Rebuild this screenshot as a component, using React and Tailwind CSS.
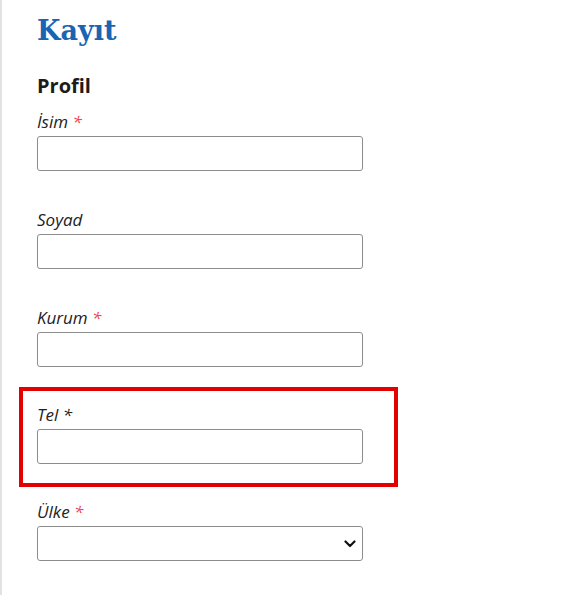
const fields = [
  { id: 'isim', label: 'İsim', required: true },
  { id: 'soyad', label: 'Soyad' },
  { id: 'kurum', label: 'Kurum', required: true },
]

function Label({ text, required, plainStar }) {
  return (
    <label className="block italic text-[17px] leading-[24px] text-[#222] mb-[2px]">
      {text}
      {required && <span className="text-[#f2414b]"> *</span>}
      {plainStar && <span> *</span>}
    </label>
  )
}

function TextField({ label, required, plainStar }) {
  return (
    <div>
      <Label text={label} required={required} plainStar={plainStar} />
      <input
        type="text"
        className="block w-[326px] h-[35px] border border-[#8d8d8d] rounded-[3px] bg-white px-2 outline-none"
      />
    </div>
  )
}

export default function App() {
  return (
    <div
      className="min-h-[595px] bg-white border-l-2 border-[#e2e2e2]"
      style={{ fontFamily: '"Open Sans", "Noto Sans", sans-serif' }}
    >
      <div className="pl-[35px] pt-[13px]">
        <h1 className="font-['DejaVu_Serif',serif] font-bold text-[27px] leading-[36px] text-[#1a64b4]">
          Kayıt
        </h1>

        <h2 className="mt-[23px] font-bold text-[20px] leading-[28px] text-[#1c1c1c]">Profil</h2>

        <div className="mt-[10px] flex flex-col gap-[37px]">
          {fields.map((f) => (
            <TextField key={f.id} label={f.label} required={f.required} />
          ))}
        </div>

        {/* Tel, highlighted */}
        <div className="mt-[20px] -ml-[18px] w-[379px] border-4 border-[#e30000] pt-[12px] pb-[19px] pl-[14px]">
          <TextField label="Tel" plainStar />
        </div>

        <div className="mt-[13px]">
          <Label text="Ülke" required />
          <div className="relative w-[326px]">
            <select className="block w-[326px] h-[35px] border border-[#8d8d8d] rounded-[3px] bg-white px-2 appearance-none outline-none">
              <option value=""></option>
            </select>
            <svg
              className="absolute right-[7px] top-[14px] pointer-events-none"
              width="12"
              height="8"
              viewBox="0 0 12 8"
              fill="none"
            >
              <path d="M1.5 1.5l4.5 4.5 4.5-4.5" stroke="#111" strokeWidth="2.2" strokeLinecap="round" strokeLinejoin="round" />
            </svg>
          </div>
        </div>
      </div>
    </div>
  )
}
